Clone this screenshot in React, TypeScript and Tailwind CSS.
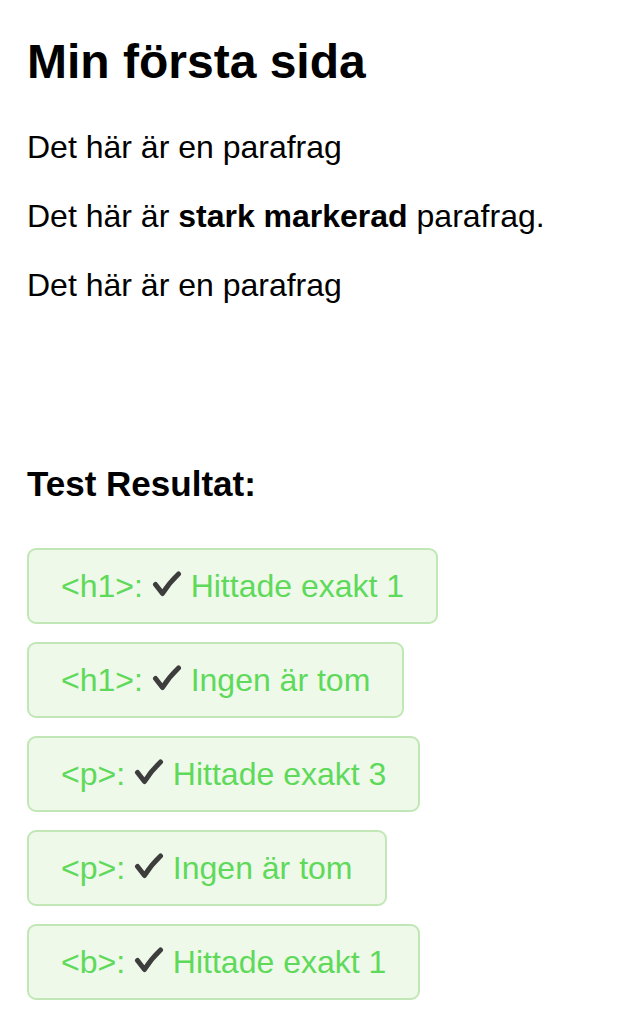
import React from "react";

const results = [
  { tag: "<h1>", text: "Hittade exakt 1" },
  { tag: "<h1>", text: "Ingen är tom" },
  { tag: "<p>", text: "Hittade exakt 3" },
  { tag: "<p>", text: "Ingen är tom" },
  { tag: "<b>", text: "Hittade exakt 1" },
];

// bock som i referensen (grå, rundade ändar)
const Check = () => (
  <svg
    viewBox="0 0 30 26"
    className="inline-block h-[26px] w-[30px] align-baseline"
    fill="none"
    stroke="#3d3d3d"
    strokeWidth={5}
    strokeLinecap="round"
    strokeLinejoin="round"
  >
    <path d="M3.5 13.5 L10.5 22.5 Q17 12 26.5 3" />
  </svg>
);

export default function App() {
  return (
    <div className="min-h-screen bg-white px-[27px] pt-[38px] font-['Liberation_Sans',Arial,sans-serif] text-black">
      <h1 className="text-[48px] font-bold leading-none">Min första sida</h1>
      <p className="mt-[45px] text-[32px] leading-[32px]">Det här är en parafrag</p>
      <p className="mt-[37px] text-[32px] leading-[32px]">
        Det här är <b>stark markerad</b> parafrag.
      </p>
      <p className="mt-[37px] text-[32px] leading-[32px]">Det här är en parafrag</p>

      <h3 className="mt-[165px] text-[35px] font-bold leading-[35px]">Test Resultat:</h3>

      <div className="mt-[47px] flex flex-col items-start gap-[18px]">
        {results.map((r, i) => (
          <div
            key={i}
            className="rounded-[9px] border-2 border-[#c0e7b5] bg-[#eef9ea] px-[32px] py-[20px] text-[32px] leading-[32px] text-[#5fd95a]"
          >
            {r.tag}: <Check /> {r.text}
          </div>
        ))}
      </div>
    </div>
  );
}
